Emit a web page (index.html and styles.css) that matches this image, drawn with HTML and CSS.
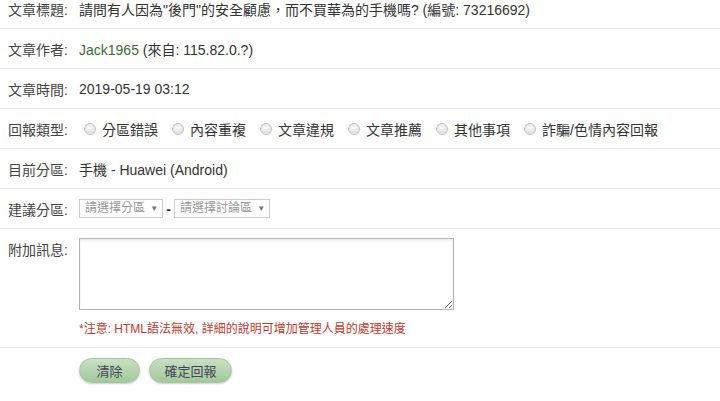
FILE: index.html
```html
<!DOCTYPE html>
<html lang="zh-Hant">
<head>
    <meta charset="UTF-8">
    <meta name="viewport" content="width=device-width, initial-scale=1.0">
    <title>文章回報</title>
    <link rel="stylesheet" href="styles.css">
</head>
<body>
    <div class="report">
        <div class="row">
            <label class="name">文章標題:</label>
            <div class="value">請問有人因為"後門"的安全顧慮，而不買華為的手機嗎? (編號: 73216692)</div>
        </div>
        <div class="row">
            <label class="name">文章作者:</label>
            <div class="value"><a class="author" href="#">Jack1965</a> (來自: 115.82.0.?)</div>
        </div>
        <div class="row">
            <label class="name">文章時間:</label>
            <div class="value">2019-05-19 03:12</div>
        </div>
        <div class="row">
            <label class="name">回報類型:</label>
            <div class="value types">
                <label class="opt"><input type="radio" name="type"> 分區錯誤</label>
                <label class="opt"><input type="radio" name="type"> 內容重複</label>
                <label class="opt"><input type="radio" name="type"> 文章違規</label>
                <label class="opt"><input type="radio" name="type"> 文章推薦</label>
                <label class="opt"><input type="radio" name="type"> 其他事項</label>
                <label class="opt"><input type="radio" name="type"> 詐騙/色情內容回報</label>
            </div>
        </div>
        <div class="row">
            <label class="name">目前分區:</label>
            <div class="value">手機 - Huawei (Android)</div>
        </div>
        <div class="row">
            <label class="name">建議分區:</label>
            <div class="value selects">
                <span class="select">請選擇分區 <i>▼</i></span>
                <span class="dash">-</span>
                <span class="select">請選擇討論區 <i>▼</i></span>
            </div>
        </div>
        <div class="row tall">
            <label class="name">附加訊息:</label>
            <div class="value">
                <textarea class="msg"></textarea>
                <p class="note">*注意: HTML語法無效, 詳細的說明可增加管理人員的處理速度</p>
            </div>
        </div>
        <div class="row buttons">
            <span class="name"></span>
            <div class="value actions">
                <button class="btn btn-clear" type="button">清除</button>
                <button class="btn btn-send" type="button">確定回報</button>
            </div>
        </div>
    </div>
</body>
</html>
```

FILE: styles.css
```css
body {
    margin: 0;
    background: #fff;
    font-family: "Liberation Sans", Arial, "Noto Sans CJK TC", sans-serif;
    font-size: 14px;
    color: #333;
}
.report {
    margin-top: -11px;
}
.row {
    display: flex;
    align-items: center;
    height: 39px;
    border-bottom: 1px solid #ececec;
}
.name {
    width: 68px;
    flex: none;
    text-align: right;
    padding-right: 11px;
    color: #444;
}
.value {
    white-space: nowrap;
}
.author {
    color: #3d6b35;
    text-decoration: none;
}
.types {
    display: flex;
    gap: 9px;
}
.opt {
    display: flex;
    align-items: center;
    gap: 6px;
}
.opt input {
    appearance: none;
    -webkit-appearance: none;
    margin: 0 0 0 5px;
    width: 12px;
    height: 12px;
    border-radius: 50%;
    border: 1px solid #c4c4c4;
    background: radial-gradient(circle at 50% 40%, #f6f6f6, #dcdcdc);
}
.selects {
    display: flex;
    align-items: center;
}
.select {
    display: inline-block;
    border: 1px solid #ccc;
    height: 17px;
    line-height: 17px;
    padding: 0 4px 0 5px;
    font-size: 12px;
    color: #999;
}
.select i {
    font-style: normal;
    font-size: 8px;
    color: #777;
    margin-left: 2px;
    vertical-align: 1px;
}
.dash {
    margin: 0 3px;
    color: #333;
    font-weight: bold;
}
.tall {
    height: 118px;
    align-items: flex-start;
}
.tall .name {
    padding-top: 10px;
}
.msg {
    display: block;
    margin-top: 9px;
    width: 373px;
    height: 70px;
    border: 1px solid #b4b4b4;
    box-shadow: inset 0 2px 3px rgba(0, 0, 0, 0.08);
    resize: both;
    padding: 0;
}
.note {
    margin: 9px 0 0;
    font-size: 12px;
    color: #c0392b;
}
.buttons {
    border-bottom: none;
    height: 44px;
    align-items: flex-start;
    padding-top: 10px;
}
.actions {
    display: flex;
    gap: 9px;
}
.btn {
    font-family: "Liberation Sans", Arial, "Noto Sans CJK TC", sans-serif;
    font-size: 13px;
    color: #445;
    height: 25px;
    padding: 0;
    border: 1px solid #a3c59d;
    border-radius: 13px;
    background: linear-gradient(#c8e0c3, #a3c89d);
    box-shadow: 0 1px 2px rgba(0, 0, 0, 0.2);
}
.btn-clear {
    width: 61px;
}
.btn-send {
    width: 83px;
}
```
